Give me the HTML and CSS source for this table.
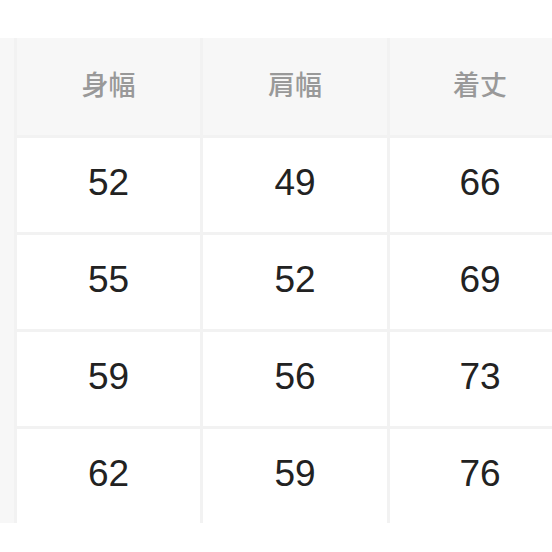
FILE: index.html
```html
<!DOCTYPE html>
<html lang="ja">
<head>
<meta charset="utf-8">
<link rel="stylesheet" href="styles.css">
</head>
<body>
<div class="table">
  <div class="side"></div>
  <div class="cell head">身幅</div>
  <div class="cell head">肩幅</div>
  <div class="cell head">着丈</div>
  <div class="cell">52</div>
  <div class="cell">49</div>
  <div class="cell">66</div>
  <div class="cell">55</div>
  <div class="cell">52</div>
  <div class="cell">69</div>
  <div class="cell">59</div>
  <div class="cell">56</div>
  <div class="cell">73</div>
  <div class="cell">62</div>
  <div class="cell">59</div>
  <div class="cell">76</div>
</div>
</body>
</html>
```
FILE: styles.css
```css
html, body {
  margin: 0;
  padding: 0;
  background: #ffffff;
  overflow: hidden;
}
.table {
  margin-top: 38px;
  display: grid;
  width: max-content;
  grid-template-columns: 14px 183px 184px 180px;
  grid-template-rows: 97px 94px 94px 94px 94px;
  column-gap: 3px;
  row-gap: 3px;
  background: #f2f2f2;
}
.side {
  grid-row: 1 / 6;
  grid-column: 1;
  background: #f7f7f7;
}
.cell {
  display: flex;
  align-items: center;
  justify-content: center;
  background: #ffffff;
  color: #222222;
  font-family: "Liberation Sans", Arial, sans-serif;
  font-size: 37px;
  padding-bottom: 4px;
}
.head {
  background: #f7f7f7;
  color: #999999;
  font-family: "Noto Sans CJK JP", "Noto Sans", sans-serif;
  font-size: 27px;
  font-weight: 500;
  padding-bottom: 6px;
}
```
